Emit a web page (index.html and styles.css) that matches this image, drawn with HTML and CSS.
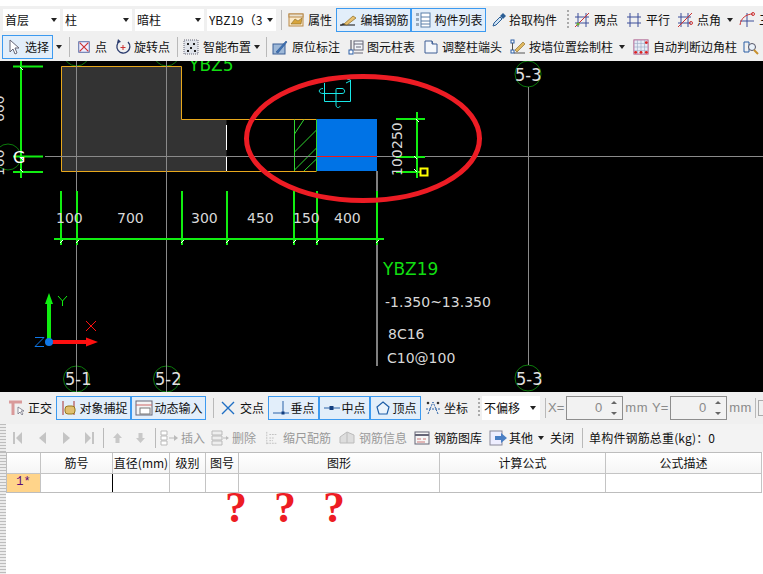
FILE: index.html
```html
<!DOCTYPE html>
<html lang="zh">
<head>
<meta charset="utf-8">
<title>钢筋</title>
<link rel="stylesheet" href="styles.css">
</head>
<body>
<div class="app">
  <div class="topstrip"></div>

  <div class="bar row1">
    <div class="combo c1"><span>首层</span><i class="arrow"></i></div>
    <div class="combo c2"><span>柱</span><i class="arrow"></i></div>
    <div class="combo c2"><span>暗柱</span><i class="arrow"></i></div>
    <div class="combo c2 last"><span>YBZ19（3</span><i class="arrow"></i></div>
    <i class="sep s5"></i>
    <div class="tool ml6"><svg class="ic" viewBox="0 0 16 16"><rect x="1" y="2" width="14" height="12" fill="#fbe9c8" stroke="#b98a4a"/><rect x="1" y="2" width="14" height="3" fill="#e9e2d2" stroke="#b98a4a"/><path d="M3 12l4-5 3 2 4-3-1 6z" fill="#d8a53c" stroke="#8a6a20" stroke-width=".6"/></svg><span>属性</span></div>
    <div class="tool on w75 ml4"><svg class="ic w18" viewBox="0 0 18 16"><path d="M1 13h15" stroke="#333" stroke-width="1.2"/><path d="M5 12l9-8 3 2-9 7z" fill="#e8c070" stroke="#8a6a20" stroke-width=".7"/><path d="M1 14l5-1.500-2-1.500z" fill="#333"/></svg><span>编辑钢筋</span></div>
    <div class="tool on w75"><svg class="ic" viewBox="0 0 16 16"><rect x="1" y="1" width="3" height="3" fill="#9ab" /><rect x="1" y="6" width="3" height="3" fill="#9ab"/><rect x="1" y="11" width="3" height="3" fill="#9ab"/><rect x="6" y="1" width="9" height="14" fill="#fff" stroke="#5a7fa8"/><path d="M6 5h9M6 9h9M6 12h9" stroke="#5a7fa8"/></svg><span>构件列表</span></div>
    <div class="tool gap2 ml5"><svg class="ic" viewBox="0 0 16 16"><path d="M2 14l1-3 6-6 2 2-6 6z" fill="#cfe3f5" stroke="#2b5e95"/><path d="M9 4l2-2 1-1 3 3-1 1-2 2z" fill="#2b5e95"/></svg><span>拾取构件</span></div>
    <i class="grip ml10"></i>
    <div class="tool ml5"><svg class="ic" viewBox="0 0 16 16"><path d="M4 1v14M12 1v14M1 5h14M1 11h14" stroke="#3d4f9a"/><path d="M1 15L15 1" stroke="#c33"/><circle cx="4" cy="12" r="1.600" fill="#6a3"/></svg><span>两点</span></div>
    <div class="tool ml8"><svg class="ic" viewBox="0 0 16 16"><path d="M4 1v14M12 1v14M1 5h14M1 11h14" stroke="#3d4f9a"/></svg><span>平行</span></div>
    <div class="tool ml7"><svg class="ic" viewBox="0 0 16 16"><path d="M4 1v14M11 1v14M1 5h13M1 11h13" stroke="#3d4f9a"/><path d="M1 15L15 1" stroke="#c33"/><circle cx="14" cy="11" r="1.500" fill="none" stroke="#c33"/></svg><span>点角</span></div>
    <i class="arrow ml6"></i>
    <div class="tool ml6"><svg class="ic" viewBox="0 0 16 16"><path d="M8 1v14M1 9h14" stroke="#3d4f9a"/><path d="M1 13C2 6 7 2 14 2" fill="none" stroke="#c33"/><circle cx="14" cy="2" r="1.500" fill="none" stroke="#c33"/></svg><span>三点</span></div>
  </div>

  <div class="bar row2">
    <div class="tool on w51 ml2 pad8"><svg class="ic w10" viewBox="0 0 10 16"><path d="M1 1v12l3-3 2 5 2-1-2-5h4z" fill="#fff" stroke="#667"/></svg><span class="ml6">选择</span></div>
    <i class="arrow ml3"></i>
    <i class="sep s7"></i>
    <div class="tool ml7"><svg class="ic w14" viewBox="0 0 16 16"><rect x="2" y="2" width="12" height="12" fill="#eef" stroke="#445a9c"/><path d="M3 3l10 10M13 3L3 13" stroke="#c33" stroke-width="1.400"/></svg><span>点</span></div>
    <div class="tool gap3 ml8"><svg class="ic" viewBox="0 0 16 16"><path d="M5 2A6.500 6.500 0 1 0 13 3" fill="none" stroke="#2b3c6e" stroke-width="1.300"/><path d="M3 0l3 3-4 1z" fill="#2b3c6e"/><path d="M8 6v5M5.500 8.500h5" stroke="#c33"/></svg><span>旋转点</span></div>
    <i class="sep s7"></i>
    <div class="tool ml5"><svg class="ic" viewBox="0 0 16 16"><rect x="1" y="1" width="14" height="14" fill="#dfe3ea" stroke="#667" stroke-dasharray="1 1"/><path d="M4 4h2v2H4zM10 4h2v2h-2zM7 8h2v2H7zM4 11h2v2H4zM11 11h2v2h-2z" fill="#222"/></svg><span>智能布置</span></div>
    <i class="arrow ml3"></i>
    <i class="sep s6"></i>
    <div class="tool ml5"><svg class="ic" viewBox="0 0 16 16"><rect x="1" y="5" width="12" height="10" fill="#9db8d8" stroke="#3a5f95"/><path d="M4 13L14 2l1 1L6 14z" fill="#3f73b5" stroke="#234b85" stroke-width=".5"/></svg><span>原位标注</span></div>
    <div class="tool gap3 ml8"><svg class="ic" viewBox="0 0 16 16"><path d="M3 1v11" stroke="#445"/><rect x="1" y="11" width="4" height="4" fill="#fff" stroke="#2b5ea5"/><rect x="6" y="2" width="9" height="9" fill="#f2f5fa" stroke="#667"/><path d="M6 5h9M8 8h5" stroke="#667"/><path d="M6 14h9" stroke="#667"/></svg><span>图元柱表</span></div>
    <div class="tool gap3 ml8"><svg class="ic" viewBox="0 0 16 16"><path d="M2 2h7l1 3h4v9H2z" fill="#f4f7fb" stroke="#3f5f95"/><path d="M9 2v3h1" stroke="#3f5f95" fill="none"/></svg><span>调整柱端头</span></div>
    <div class="tool gap3 ml8"><svg class="ic" viewBox="0 0 16 16"><rect x="1" y="1" width="3" height="3" fill="#fff" stroke="#2b5ea5"/><rect x="1" y="11" width="3" height="3" fill="#fff" stroke="#2b5ea5"/><path d="M2.500 4v7M4 14h11" stroke="#555"/><path d="M5 11l8-8 2 2-8 8z" fill="#e0b860" stroke="#85651f" stroke-width=".6"/></svg><span>按墙位置绘制柱</span></div>
    <i class="arrow ml6"></i>
    <div class="tool gap3 ml7"><svg class="ic w18" viewBox="0 0 18 18"><rect x="1" y="1" width="16" height="16" fill="#e6ecf6" stroke="#a58"/><path d="M5 1v16M9 1v16M13 1v16M1 5h16M1 9h16M1 13h16" stroke="#9aa8c4" stroke-width=".7"/><circle cx="3" cy="15" r="1.600" fill="#d22"/><circle cx="9" cy="15" r="1.600" fill="#d22"/><circle cx="15" cy="15" r="1.600" fill="#d22"/><circle cx="15" cy="4" r="1.600" fill="#d22"/></svg><span>自动判断边角柱</span></div>
    <div class="tool ml6"><svg class="ic" viewBox="0 0 16 16"><path d="M1 3h5v10H1z" fill="none" stroke="#2b5ea5"/><circle cx="9" cy="8" r="3.500" fill="#eaf2fb" stroke="#556"/><path d="M11 11l4 4" stroke="#c8902c" stroke-width="2"/></svg></div>
  </div>

  <svg class="canvas" viewBox="0 61 763 331" xmlns="http://www.w3.org/2000/svg">
    <rect x="0" y="61" width="763" height="331" fill="#000"/>
    <!-- axis circles -->
    <g fill="none" stroke="#0b7a0b" stroke-width="1">
      <circle cx="76.500" cy="53" r="13"/><circle cx="166.500" cy="53" r="13"/><circle cx="528" cy="74" r="13"/>
      <circle cx="8" cy="157" r="13"/>
      <circle cx="76.500" cy="379" r="13"/><circle cx="166.500" cy="379" r="13"/><circle cx="528" cy="378" r="13"/>
    </g>
    <!-- column shape -->
    <path d="M61.500 66.500H181.500V119.500H226.500V171.500H61.500Z" fill="#333"/>
    <path d="M226.500 171.500H61.500V66.500H181.500V119.500H316.500M226.500 171.500H316.500" fill="none" stroke="#e8a81c"/>
    <path d="M226.500 125V150M226.500 156V171M377 171V366" stroke="#fff" fill="none"/>
    <rect x="316.500" y="119" width="60.500" height="52" fill="#0073e6"/>
    <path d="M294.500 119.500V171M316.500 119.500V171M294.500 134L304 119.500M294.500 152L316.500 130M294.500 170L316.500 148M304 171L316.500 159" stroke="#2fd52f" fill="none"/>
    <!-- grid lines -->
    <path d="M76.500 61V392M166.500 61V392M528.500 87V365M45 156.500H763" stroke="#8a8a8a" fill="none"/>
    <path d="M317 156.500H377" stroke="#f01818" stroke-width="1.200"/>
    <!-- stirrup glyph -->
    <path d="M324.500 83V101.500H350.500V80L347 79M323 93.500H342C346 93.500 345 88.500 342 88.500H337C336 88.500 336 89 336 90V105C336 108.500 340 108 340 106M323 93.500C318 93.500 318 88.500 323 88.500M350 81L346 83" fill="none" stroke="#19e8e8"/>
    <!-- dims -->
    <g stroke="#11ee11" stroke-width="2" fill="none">
      <path d="M21 60V178M13 66.500H43M13 156.500H43M13 172H43"/>
      <path d="M54 239H384M61 191V245M77 191V245M182 191V245M227 191V245M294 191V245M317 191V245M377 191V245"/>
      <path d="M417 112V178M396 119H425M396 157H425M396 172H420"/>
    </g>
    <g stroke="#fff" stroke-width="1" fill="none">
      <path d="M20 67l3 3M20 157l3 3M20 169l3 3M60 243l3-3M76 243l3-3M181 243l3-3M226 243l3-3M293 243l3-3M316 243l3-3M376 243l3-3M416 119l3 3M414 156l3 3M414 169l3 3"/>
    </g>
    <rect x="420.500" y="168.500" width="7" height="7" fill="none" stroke="#ffff00" stroke-width="2"/>
    <!-- ellipse markup -->
    <ellipse cx="363" cy="138.500" rx="116.500" ry="62" fill="none" stroke="#ed1c24" stroke-width="5"/>
    <!-- texts -->
    <g class="cad">
      <text x="56" y="223">100</text><text x="117" y="223">700</text><text x="191" y="223">300</text>
      <text x="247" y="223">450</text><text x="293" y="223">150</text><text x="334" y="223">400</text>
      <text transform="translate(402 176) rotate(-90)">100</text>
      <text transform="translate(402 149) rotate(-90)">250</text>
      <text transform="translate(4 122) rotate(-90)">600</text>
      <text transform="translate(4 176) rotate(-90)">100</text>
      <text x="13" y="163" class="big">G</text>
      <text class="axis" x="515" y="81">5-3</text>
      <text class="axis" x="65" y="385">5-1</text><text class="axis" x="155" y="385">5-2</text><text class="axis" x="516" y="385">5-3</text>
      <text x="385" y="307">-1.350~13.350</text>
      <text x="388" y="339">8C16</text>
      <text x="387" y="363">C10@100</text>
    </g>
    <text class="label" x="189" y="71">YBZ5</text>
    <text class="label" x="383" y="275">YBZ19</text>
    <!-- axes -->
    <path d="M49 342V304" stroke="#11ee11" stroke-width="4"/>
    <path d="M49 293l4 11h-8z" fill="#11ee11"/>
    <path d="M49 342H88" stroke="#ff1010" stroke-width="4"/>
    <path d="M98 342l-12 4.500v-9z" fill="#ff1010"/>
    <circle cx="49" cy="342" r="4" fill="#1078e8"/>
    <path d="M58 296l4.500 5 4.500-5M62.500 301v5" fill="none" stroke="#11ee11"/>
    <path d="M86 321l10 10M96 321l-10 10" stroke="#ff1010"/>
    <path d="M35 337.500h9l-9 9h9" fill="none" stroke="#1078e8"/>
  </svg>

  <div class="bar row3">
    <div class="tool gap2 ml8"><svg class="ic w18" viewBox="0 0 18 16"><path d="M1 2h13M5 2v13" stroke="#d99a9a" stroke-width="3"/><path d="M10 7v7l2-2 2 3 1-1-2-3h3z" fill="#fff" stroke="#667" stroke-width=".7"/></svg><span>正交</span></div>
    <div class="tool on w75 ml4 pad1"><svg class="ic w18" viewBox="0 0 18 16"><path d="M3 1v14M14 1v14" stroke="#a33"/><rect x="5" y="6" width="10" height="8" rx="3" fill="#e0c070" stroke="#96781f"/></svg><span>对象捕捉</span></div>
    <div class="tool on w75 pad1"><svg class="ic w18" viewBox="0 0 18 16"><rect x="1" y="1" width="16" height="14" fill="#f4f4f4" stroke="#667"/><path d="M1 5h16" stroke="#c66"/><rect x="5" y="8" width="10" height="6" fill="#fff" stroke="#777"/></svg><span>动态输入</span></div>
    <i class="sep s7"></i>
    <div class="tool ml6"><svg class="ic" viewBox="0 0 16 16"><path d="M2 2l12 12M14 2L2 14" stroke="#1f6fc4" stroke-width="1.400"/></svg><span>交点</span></div>
    <div class="tool on w51 ml4 pad1"><svg class="ic" viewBox="0 0 16 16"><path d="M0 13h16M10 1v12" stroke="#2a62a8"/><rect x="8.500" y="11.500" width="3" height="3" fill="#123e80"/></svg><span>垂点</span></div>
    <div class="tool on w51 pad1"><svg class="ic" viewBox="0 0 16 16"><path d="M0 8h16" stroke="#2a62a8"/><rect x="5.500" y="6" width="4" height="4" fill="#123e80"/></svg><span>中点</span></div>
    <div class="tool on w51 pad1"><svg class="ic" viewBox="0 0 16 16"><path d="M8 2l6 5-2 7H4L2 7z" fill="#eaf3fc" stroke="#1f5fa8" stroke-width="1.200"/></svg><span>顶点</span></div>
    <div class="tool gap3 ml4"><svg class="ic" viewBox="0 0 16 16"><path d="M3 14L8 2l5 12M1 9h14" fill="none" stroke="#2a62a8" stroke-dasharray="2 1"/><circle cx="3" cy="3" r="1.300" fill="#333"/><circle cx="13" cy="3" r="1.300" fill="#333"/></svg><span>坐标</span></div>
    <i class="grip ml10"></i>
    <div class="combo c3 ml2"><span>不偏移</span><i class="arrow"></i></div>
    <i class="sep s5"></i>
    <span class="dim ml2">X=</span>
    <div class="spin ml2"><span>0</span><b class="ups"><i class="mini up"></i><i class="mini"></i></b></div>
    <span class="dim ml2 ls">mm</span>
    <span class="dim ml4">Y=</span>
    <div class="spin ml2"><span>0</span><b class="ups"><i class="mini up"></i><i class="mini"></i></b></div>
    <span class="dim ml2 ls">mm</span>
    <i class="sep s3"></i>
    <i class="box ml2"></i>
  </div>

  <div class="bar row4">
    <i class="dots"></i>
    <svg class="nav ml6" viewBox="0 0 11 14"><path d="M1 1h2v12H1zM10 1v12L4 7z" fill="#c4c4c4"/></svg>
    <svg class="nav nav-s ml15" viewBox="0 0 9 14"><path d="M8 1v12L1 7z" fill="#c4c4c4"/></svg>
    <svg class="nav nav-s ml15" viewBox="0 0 9 14"><path d="M1 1v12l7-6z" fill="#c4c4c4"/></svg>
    <svg class="nav ml13" viewBox="0 0 11 14"><path d="M10 1H8v12h2zM1 1v12l6-6z" fill="#c4c4c4"/></svg>
    <i class="sep s8"></i>
    <svg class="nav ml8" viewBox="0 0 11 14"><path d="M5.500 2L10 7H7.500v5h-4V7H1z" fill="#c8c8c8"/></svg>
    <svg class="nav ml12" viewBox="0 0 11 14"><path d="M5.500 12L10 7H7.500V2h-4v5H1z" fill="#c8c8c8"/></svg>
    <i class="sep s9"></i>
    <div class="tool gap3 off ml4"><svg class="ic w18" viewBox="0 0 18 16"><path d="M1 1h6v4H1zM1 6h6v4H1zM1 11h6v4H1z" fill="#fff" stroke="#bbb"/><path d="M9 8h5" stroke="#bbb"/><path d="M18 8l-4 3V5z" fill="#bbb"/></svg><span>插入</span></div>
    <div class="tool gap3 off ml6"><svg class="ic w18" viewBox="0 0 18 16"><path d="M1 1h10v4H1zM1 6h10v4H1zM1 11h10v4H1z" fill="#eee" stroke="#bbb"/><path d="M12 8h3" stroke="#bbb"/><path d="M18 8l-3 2V6z" fill="#bbb"/></svg><span>删除</span></div>
    <div class="tool off ml9"><svg class="ic w14" viewBox="0 0 16 16"><path d="M2 1v14M2 14h12M5 4h9M5 8h6M5 11h4" stroke="#bbb" stroke-dasharray="2 1"/></svg><span>缩尺配筋</span></div>
    <div class="tool gap3 off ml7"><svg class="ic w18" viewBox="0 0 18 16"><path d="M2 7l7-5 7 3v8H2z" fill="#ddd" stroke="#bbb"/><path d="M9 2v11" stroke="#bbb"/></svg><span>钢筋信息</span></div>
    <div class="tool ml7"><svg class="ic" viewBox="0 0 16 16"><rect x="1" y="2" width="14" height="12" fill="#f6f6f6" stroke="#667"/><path d="M1 5h14" stroke="#667" stroke-width="2"/><path d="M3 9h4M9 9h3M3 12h8" stroke="#c77"/></svg><span>钢筋图库</span></div>
    <div class="tool gap2 ml7"><svg class="ic w18" viewBox="0 0 18 16"><rect x="1" y="1" width="12" height="14" fill="#eef" stroke="#889"/><path d="M6 6h6V3l6 5-6 5v-3H6z" fill="#4a7fc4"/></svg><span>其他</span></div>
    <i class="arrow ml5"></i>
    <span class="plain ml6">关闭</span>
    <i class="sep s8"></i>
    <span class="plain ml6 wide">单构件钢筋总重(kg)：0</span>
  </div>

  <div class="lower">
    <i class="dots"></i>
    <div class="panel">
      <div class="grid">
        <div class="th"></div><div class="th">筋号</div><div class="th">直径(mm)</div><div class="th">级别</div><div class="th">图号</div><div class="th">图形</div><div class="th">计算公式</div><div class="th">公式描述</div>
        <div class="td rowhead">1*</div><div class="td"></div><div class="td cursor"></div><div class="td"></div><div class="td"></div><div class="td"></div><div class="td"></div><div class="td"></div>
      </div>
      <div class="marks"><span>?</span><span>?</span><span>?</span></div>
    </div>
  </div>
</div>
</body>
</html>
```
FILE: styles.css
```css
* { box-sizing: border-box; }
html, body { margin: 0; padding: 0; background: #fff; }
body { font: 12px/16px "Noto Sans CJK SC", "Liberation Sans", sans-serif; color: #111; }
.app { width: 763px; height: 574px; overflow: hidden; display: flex; flex-direction: column; }
.topstrip { height: 6px; background: #fff; flex: none; }
.bar { display: flex; align-items: center; background: #f0f0f0; flex: none; white-space: nowrap; overflow: hidden; }
.row1 { height: 27px; padding-left: 3px; }
.row2 { height: 28px; }
.row3 { height: 32px; }
.row4 { height: 28px; background: #f3f3f3; }
.canvas { display: block; width: 763px; height: 331px; flex: none; }

.combo { height: 22px; background: #fff; display: flex; align-items: center; padding-left: 2px; margin-right: 3px; flex: none; }
.combo span { flex: 1; overflow: hidden; }
.combo .arrow { margin-right: 3px; }
.combo.last { margin-right: 0; }
.c1 { width: 57px; }
.c2 { width: 69px; }
.c3 { width: 58px; height: 24px; margin-right: 0; }
.c3 .arrow { margin-right: 4px; }

.arrow { display: block; width: 0; height: 0; border: 3px solid transparent; border-top: 4px solid #222; border-bottom: 0; flex: none; }
.sep { display: block; width: 1px; height: 20px; background: #b9b9b9; flex: none; }
.s3 { margin-left: 3px; }
.s5 { margin-left: 5px; }
.s6 { margin-left: 6px; }
.s7 { margin-left: 7px; }
.s8 { margin-left: 8px; }
.s9 { margin-left: 9px; }
.grip { display: block; width: 2px; height: 20px; flex: none; background: repeating-linear-gradient(#aaa 0 2px, transparent 2px 4px); }

.tool { display: flex; align-items: center; gap: 4px; height: 22px; flex: none; }
.tool.gap2 { gap: 2px; }
.tool.gap3 { gap: 3px; }
.tool.on { border: 1px solid #3c9af0; background: #e2eefa; justify-content: center; height: 24px; }
.tool.off { color: #9a9a9a; }
.w75 { width: 75px; }
.w51 { width: 51px; }
.pad8 { justify-content: flex-start !important; padding-left: 6px; }
.pad1 { gap: 2px; }
.ic { width: 16px; height: 16px; flex: none; }
.w18 { width: 18px; }
.w14 { width: 14px; }
.w10 { width: 10px; }
.row2 .tool.on { height: 24px; gap: 0; }

.ml2 { margin-left: 2px; }
.ml3 { margin-left: 3px; }
.ml4 { margin-left: 4px; }
.ml5 { margin-left: 5px; }
.ml6 { margin-left: 6px; }
.ml7 { margin-left: 7px; }
.ml8 { margin-left: 8px; }
.ml9 { margin-left: 9px; }
.ml10 { margin-left: 10px; }
.ml12 { margin-left: 12px; }
.ml13 { margin-left: 13px; }
.ml15 { margin-left: 15px; }

.dim { color: #8a8a8a; font-family: "Liberation Sans", sans-serif; font-size: 13px; flex: none; }
.ls { letter-spacing: .5px; }
.spin { width: 57px; height: 24px; border: 1px solid #8e8e8e; background: #f2f2f2; display: flex; align-items: center; justify-content: flex-end; color: #8a8a8a; font-family: "Liberation Sans", sans-serif; font-size: 13px; flex: none; }
.ups { display: flex; flex-direction: column; gap: 8px; width: 17px; align-items: center; margin-left: 3px; }
.mini { display: block; width: 0; height: 0; border: 3px solid transparent; border-top: 3px solid #666; border-bottom: 0; }
.mini.up { border-top: 0; border-bottom: 3px solid #666; }
.box { display: block; width: 8px; height: 16px; border: 1px solid #aaa; flex: none; }

.dots { display: block; width: 6px; align-self: stretch; flex: none; background: repeating-linear-gradient(#bdbdbd 0 1px, #ececec 1px 3px); }
.nav { width: 11px; height: 14px; flex: none; }
.nav-s { width: 9px; }
.plain { flex: none; }
.wide { letter-spacing: .15px; }

.lower { flex: 1; display: flex; min-height: 0; background: #fff; }
.panel { flex: 1; min-width: 0; }
.grid { display: grid; grid-template-columns: 34px 72px 57px 36px 33px 201px 166px 156px; grid-template-rows: 21px 18px; border-top: 1px solid #bdbdbd; border-bottom: 1px solid #bdbdbd; border-left: 1px solid #bdbdbd; width: 756px; }
.th { border-right: 1px solid #c4c4c4; border-bottom: 1px solid #c4c4c4; text-align: center; line-height: 20px; background: linear-gradient(#fff, #f5f5f5); }
.td { border-right: 1px solid #c4c4c4; background: #fff; }
.rowhead { background: #ffd48a; color: #5a0a7a; text-align: center; font-family: "Liberation Mono", monospace; line-height: 17px; }
.cursor { border-left: 1px solid #000; margin-left: -1px; }
.marks { display: flex; padding-left: 219px; gap: 31px; color: #ed1c24; font: bold 44px/30px "Liberation Serif", serif; }
.marks span { width: 18px; text-align: center; }

.cad text { fill: #d8d8d8; font: 14px "DejaVu Sans", sans-serif; }
.cad .big { font-size: 16px; fill: #fff; }
.cad .axis { font-size: 18px; font-stretch: condensed; fill: #e0e0e0; }
.label { fill: #11dd11; font: 17px "DejaVu Sans", sans-serif; }
```
